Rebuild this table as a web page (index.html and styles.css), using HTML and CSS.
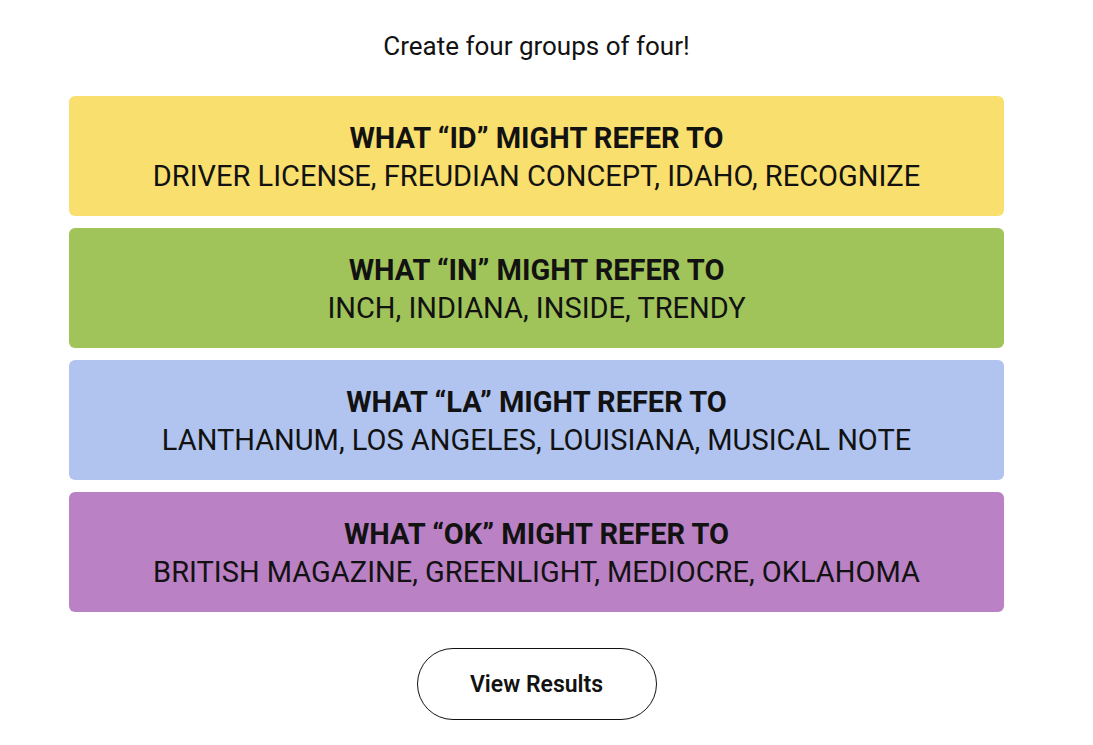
FILE: index.html
```html
<!DOCTYPE html>
<html lang="en">
<head>
<meta charset="utf-8">
<title>Connections</title>
<link rel="stylesheet" href="styles.css">
</head>
<body>
<main class="board">
  <p class="prompt">Create four groups of four!</p>
  <section class="groups">
    <div class="group yellow">
      <h3 class="group-title">WHAT “ID” MIGHT REFER TO</h3>
      <p class="group-members">DRIVER LICENSE, FREUDIAN CONCEPT, IDAHO, RECOGNIZE</p>
    </div>
    <div class="group green">
      <h3 class="group-title">WHAT “IN” MIGHT REFER TO</h3>
      <p class="group-members">INCH, INDIANA, INSIDE, TRENDY</p>
    </div>
    <div class="group blue">
      <h3 class="group-title">WHAT “LA” MIGHT REFER TO</h3>
      <p class="group-members">LANTHANUM, LOS ANGELES, LOUISIANA, MUSICAL NOTE</p>
    </div>
    <div class="group purple">
      <h3 class="group-title">WHAT “OK” MIGHT REFER TO</h3>
      <p class="group-members">BRITISH MAGAZINE, GREENLIGHT, MEDIOCRE, OKLAHOMA</p>
    </div>
  </section>
  <div class="actions">
    <button class="results-btn" type="button">View Results</button>
  </div>
</main>
</body>
</html>
```
FILE: styles.css
```css
html, body {
  margin: 0;
  padding: 0;
  background: #ffffff;
}

body {
  font-family: Roboto, "Liberation Sans", Arial, sans-serif;
  color: #121212;
}

.board {
  width: 935px;
  margin-left: 69px;
  padding-top: 32px;
  display: flex;
  flex-direction: column;
  align-items: stretch;
}

.prompt {
  margin: 0 0 36px;
  text-align: center;
  font-size: 26px;
  font-weight: 400;
  line-height: 28px;
  color: #121212;
}

.groups {
  display: flex;
  flex-direction: column;
  gap: 12px;
}

.group {
  height: 120px;
  border-radius: 6px;
  display: flex;
  flex-direction: column;
  align-items: center;
  justify-content: center;
  padding-top: 1px;
  box-sizing: border-box;
  text-align: center;
}

.yellow { background: #f9df6d; }
.green { background: #a0c35a; }
.blue { background: #b0c4ef; }
.purple { background: #ba81c5; }

.group-title {
  margin: 0;
  font-size: 29px;
  font-weight: 700;
  line-height: 38px;
  color: #121212;
}

.group-members {
  margin: 0;
  font-size: 29px;
  font-weight: 400;
  line-height: 38px;
  color: #121212;
}

.actions {
  display: flex;
  justify-content: center;
  margin-top: 36px;
}

.results-btn {
  width: 240px;
  height: 72px;
  border: 1px solid #121212;
  border-radius: 36px;
  background: #ffffff;
  font-family: Roboto, "Liberation Sans", Arial, sans-serif;
  font-size: 23px;
  font-weight: 600;
  color: #121212;
  cursor: pointer;
}
```
